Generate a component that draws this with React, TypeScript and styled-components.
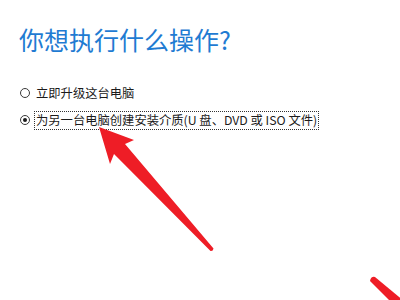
import React from 'react';
import styled, { createGlobalStyle } from 'styled-components';

const GlobalStyle = createGlobalStyle`
  html, body {
    margin: 0;
    padding: 0;
    background: #ffffff;
  }
  body {
    font-family: "Noto Sans CJK SC", "Noto Sans", sans-serif;
  }
`;

const Page = styled.div`
  position: relative;
  width: 400px;
  height: 300px;
  overflow: hidden;
  background: #fff;
  padding: 22px 0 0 19px;
  box-sizing: border-box;
`;

const Title = styled.h1`
  margin: 0;
  font-size: 25px;
  font-weight: 400;
  line-height: 34px;
  color: #1f7bd2;
  letter-spacing: 0;
`;

const Options = styled.div`
  display: flex;
  flex-direction: column;
  gap: 7px;
  margin-top: 27px;
`;

const Row = styled.label`
  display: flex;
  align-items: center;
  gap: 5px;
  height: 20px;
  font-size: 12.3px;
  color: #1b1b1b;
`;

const Radio = styled.span<{ checked?: boolean }>`
  position: relative;
  width: 10px;
  height: 10px;
  margin-left: 1px;
  box-sizing: border-box;
  border: 1px solid #3a3a3a;
  border-radius: 50%;
  flex: none;

  &::after {
    content: '';
    display: ${(props) => (props.checked ? 'block' : 'none')};
    position: absolute;
    left: 2px;
    top: 2px;
    width: 4px;
    height: 4px;
    border-radius: 50%;
    background: #1b1b1b;
  }
`;

const Label = styled.span<{ focused?: boolean }>`
  line-height: 17px;
  padding: 0 1px;
  border: 1px dotted ${(props) => (props.focused ? '#333' : 'transparent')};
  margin-left: -1px;
  white-space: nowrap;
`;

const Overlay = styled.svg`
  position: absolute;
  left: 0;
  top: 0;
  pointer-events: none;
`;

const options = [
  { text: '立即升级这台电脑', checked: false },
  { text: '为另一台电脑创建安装介质(U 盘、DVD 或 ISO 文件)', checked: true },
];

export default function App() {
  return (
    <>
      <GlobalStyle />
      <Page>
        <Title>你想执行什么操作?</Title>
        <Options>
          {options.map((o) => (
            <Row key={o.text}>
              <Radio checked={o.checked} />
              <Label focused={o.checked}>{o.text}</Label>
            </Row>
          ))}
        </Options>
        <Overlay width="400" height="300" viewBox="0 0 400 300">
          <path
            d="M99 127 L134 140 L125 144 L213.5 248.5 Q213 251.5 210.5 251 L114 154 L110 164 Z"
            fill="#ee1d26"
          />
          <path
            d="M370 281 Q371 276 375 277 L410 306 L403 314 Z"
            fill="#ee1d26"
          />
        </Overlay>
      </Page>
    </>
  );
}
